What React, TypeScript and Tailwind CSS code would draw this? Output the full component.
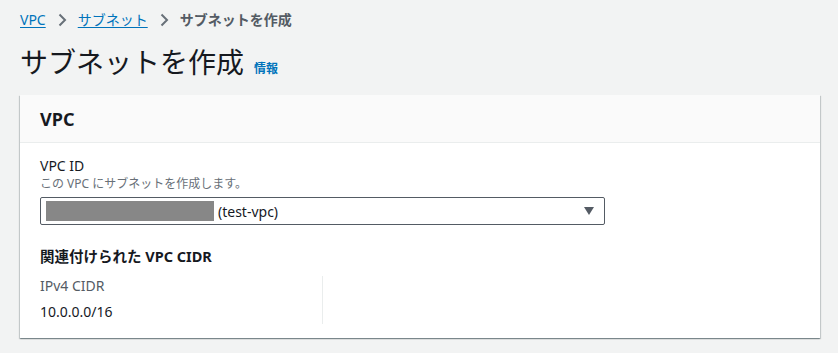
import React from 'react';

const Chevron: React.FC = () => (
  <svg width="16" height="16" viewBox="0 0 16 16" className="mx-2 shrink-0">
    <path d="M5.5 2.5 L11 8 L5.5 13.5" fill="none" stroke="#687078" strokeWidth="2" />
  </svg>
);

const App: React.FC = () => {
  return (
    <div
      className="min-h-screen w-full bg-[#f2f3f3] text-[#16191f] px-5"
      style={{ fontFamily: '"Noto Sans", "Noto Sans CJK JP", sans-serif' }}
    >
      {/* breadcrumbs */}
      <nav className="flex items-center h-[40px] text-[14px] leading-5">
        <a className="text-[#0073bb] underline underline-offset-2">VPC</a>
        <Chevron />
        <a className="text-[#0073bb] underline underline-offset-2">サブネット</a>
        <Chevron />
        <span className="text-[#545b64] font-bold">サブネットを作成</span>
      </nav>

      {/* title */}
      <div className="flex items-baseline gap-[10px] h-[55px] pt-[2px]">
        <h1 className="text-[28px] leading-[40px] font-normal">サブネットを作成</h1>
        <a className="text-[12px] font-bold text-[#0073bb]">情報</a>
      </div>

      {/* card */}
      <div className="w-[800px] bg-white shadow-[0_1px_1px_0_rgba(0,28,36,0.3),1px_1px_1px_0_rgba(0,28,36,0.15),-1px_1px_1px_0_rgba(0,28,36,0.15)]">
        <div className="h-[48px] flex items-center px-5 bg-[#fafafa] border-b border-[#eaeded]">
          <h2 className="text-[18px] font-bold leading-6">VPC</h2>
        </div>
        <div className="px-5 pt-[13px] pb-[14px]">
          <div className="text-[14px] leading-5">VPC ID</div>
          <div className="text-[12px] leading-4 text-[#687078]">この VPC にサブネットを作成します。</div>
          <div className="mt-[5px] w-[565px] h-[28px] border border-[#545b64] rounded-[2px] flex items-center pl-[5px] pr-[9px]">
            <span className="w-[168px] h-[20px] bg-[#878787]" />
            <span className="ml-[4px] text-[14px]">(test-vpc)</span>
            <svg width="12" height="10" viewBox="0 0 12 10" className="ml-auto">
              <path d="M1 1 H11 L6 9 Z" fill="#545b64" />
            </svg>
          </div>

          <h3 className="mt-[19px] text-[14.5px] font-bold leading-6">関連付けられた VPC CIDR</h3>
          <div className="mt-[8px] flex">
            <div className="w-[283px] border-r border-[#eaeded] pb-[2px]">
              <div className="text-[14px] leading-5 text-[#545b64]">IPv4 CIDR</div>
              <div className="mt-[6px] text-[14px] leading-5">10.0.0.0/16</div>
            </div>
          </div>
        </div>
      </div>
    </div>
  );
};

export default App;
